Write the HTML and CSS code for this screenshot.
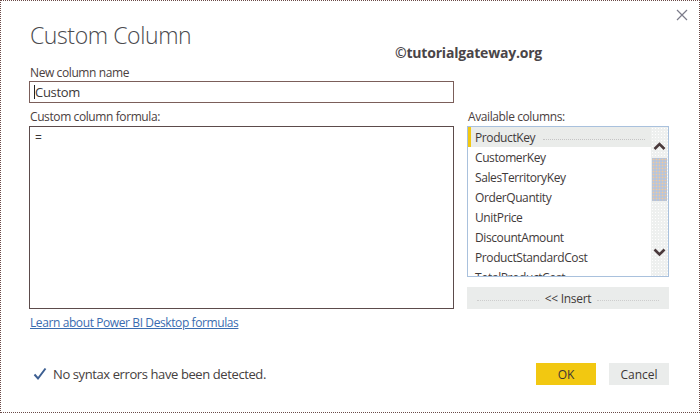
FILE: index.html
```html
<!DOCTYPE html>
<html>
<head>
<meta charset="utf-8">
<link rel="stylesheet" href="styles.css">
</head>
<body>
<div class="dialog">
  <button class="close" aria-label="Close">
    <svg width="12" height="12" viewBox="0 0 12 12"><path d="M1 1 L11 11 M11 1 L1 11" stroke="#7b7b8a" stroke-width="1.2" fill="none"/></svg>
  </button>
  <div class="watermark">©tutorialgateway.org</div>
  <h1 class="title">Custom Column</h1>
  <div class="label">New column name</div>
  <div class="name-input"><span class="caret"></span>Custom</div>
  <div class="main">
    <div class="col-left">
      <div class="label">Custom column formula:</div>
      <div class="formula">=</div>
      <a class="learn" href="#">Learn about Power BI Desktop formulas</a>
    </div>
    <div class="col-right">
      <div class="label">Available columns:</div>
      <div class="list">
        <div class="items">
          <div class="item selected"><span>ProductKey</span><span class="dots"></span></div>
          <div class="item">CustomerKey</div>
          <div class="item">SalesTerritoryKey</div>
          <div class="item">OrderQuantity</div>
          <div class="item">UnitPrice</div>
          <div class="item">DiscountAmount</div>
          <div class="item">ProductStandardCost</div>
          <div class="item">TotalProductCost</div>
        </div>
        <div class="scrollbar">
          <svg class="arrow" width="17" height="12" viewBox="0 0 17 12"><path d="M3.5 9 L8.5 4 L13.5 9" stroke="#4a3a3c" stroke-width="2.6" fill="none"/></svg>
          <div class="thumb"></div>
          <div class="track-fill"></div>
          <svg class="arrow" width="17" height="12" viewBox="0 0 17 12"><path d="M3.5 3.5 L8.5 8.5 L13.5 3.5" stroke="#4a3a3c" stroke-width="2.6" fill="none"/></svg>
        </div>
      </div>
      <button class="insert"><span class="dl"></span><span>&lt;&lt; Insert</span><span class="dl"></span></button>
    </div>
  </div>
  <div class="footer">
    <div class="status">
      <svg width="14" height="14" viewBox="0 0 14 14"><path d="M1.5 7.5 L5 11.5 L12.5 1.5" stroke="#3d5f92" stroke-width="2" fill="none"/></svg>
      <span>No syntax errors have been detected.</span>
    </div>
    <div class="buttons">
      <button class="btn ok">OK</button>
      <button class="btn cancel">Cancel</button>
    </div>
  </div>
</div>
</body>
</html>
```
FILE: styles.css
```css
* { box-sizing: border-box; }
html, body { margin: 0; padding: 0; background: #fff; }
body { font-family: "Open Sans", "Noto Sans", sans-serif; color: #454040; }
.dialog {
  position: relative;
  width: 700px;
  height: 413px;
  border: 1px dotted #6a4a48;
  padding: 19px 30px 0 28px;
  background: #fff;
}
.close {
  position: absolute;
  top: 8px;
  right: 11px;
  width: 12px;
  height: 12px;
  padding: 0;
  border: 0;
  background: none;
  display: block;
}
.close svg { display: block; }
.watermark {
  position: absolute;
  left: 394px;
  top: 43px;
  font-size: 14px;
  font-weight: 700;
  letter-spacing: -0.2px;
  color: #4a4548;
  line-height: 18px;
}
.title {
  margin: 0;
  font-size: 23px;
  font-weight: 300;
  letter-spacing: -0.4px;
  line-height: 30px;
  color: #4a4a4e;
  padding-left: 1px;
}
.label {
  font-size: 12px;
  letter-spacing: -0.4px;
  line-height: 16px;
  color: #4a4040;
  padding-left: 1px;
}
.title + .label { margin-top: 15px; }
.name-input {
  margin-top: 0;
  width: 425px;
  height: 22px;
  border: 1px solid #7b5e5a;
  font-size: 13px;
  letter-spacing: -0.3px;
  line-height: 20px;
  padding-left: 5px;
  color: #3c3838;
  display: flex;
  align-items: center;
}
.caret {
  width: 1px;
  height: 14px;
  background: #222;
  margin-left: -1px;
}
.main {
  margin-top: 6px;
  display: grid;
  grid-template-columns: 425px 202px;
  column-gap: 13px;
}
.formula {
  margin-top: 1px;
  height: 183px;
  border: 1px solid #5c4b4b;
  font-size: 12px;
  line-height: 16px;
  padding: 3px 5px;
  color: #3c3838;
}
.learn {
  display: inline-block;
  margin-top: 6px;
  font-size: 12px;
  letter-spacing: -0.4px;
  line-height: 16px;
  color: #3a6cb0;
  text-decoration: underline;
  padding-left: 1px;
}
.list {
  margin-top: 1px;
  height: 151px;
  border: 1px solid #a9c1dd;
  display: flex;
  overflow: hidden;
}
.items { flex: 1; }
.item {
  height: 20px;
  padding-top: 1px;
  line-height: 19px;
  font-size: 12px;
  letter-spacing: -0.4px;
  padding-left: 7px;
  color: #3f3a3a;
  white-space: nowrap;
}
.item.selected {
  background: #eaecea;
  border-left: 3px solid #f2c811;
  padding-left: 4px;
  display: flex;
  align-items: center;
}
.item .dots {
  flex: 1;
  margin: 4px 6px 0 8px;
  border-bottom: 1px dotted #c4c4c4;
}
.scrollbar {
  width: 17px;
  display: flex;
  flex-direction: column;
  background-color: #eef0ef;
  background-image: radial-gradient(circle, #ffffff 0.7px, transparent 1px);
  background-size: 3px 3px;
}
.arrow { display: block; margin-top: 13px; }
.thumb {
  margin: 6px 1px 0;
  height: 43px;
  background-color: #b6c5dd;
  background-image: radial-gradient(circle, #f0c89c 0.8px, transparent 1.1px);
  background-size: 3px 3px;
}
.track-fill { flex: 1; }
.scrollbar .arrow:last-child { margin: 0 0 18px; }
.insert {
  margin-top: 10px;
  width: 202px;
  height: 22px;
  border: 0;
  padding: 0 10px;
  background: #eaeceb;
  font-family: inherit;
  font-size: 12px;
  letter-spacing: -0.3px;
  color: #3f3a3a;
  display: flex;
  align-items: center;
  gap: 6px;
}
.insert .dl {
  flex: 1;
  border-bottom: 1px dotted #cdcdcd;
  margin-top: 4px;
}
.footer {
  margin-top: 31px;
  display: flex;
  align-items: center;
  justify-content: space-between;
  height: 22px;
}
.status {
  display: flex;
  align-items: center;
  gap: 6px;
  padding-left: 4px;
  font-size: 13px;
  letter-spacing: -0.4px;
  color: #454040;
}
.status svg { display: block; }
.buttons { display: flex; gap: 13px; }
.btn {
  width: 60px;
  height: 22px;
  border: 0;
  padding: 0;
  font-family: inherit;
  font-size: 12px;
  color: #3c3636;
}
.btn.ok { background: #f2c811; }
.btn.cancel { background: #eaeceb; }
```
